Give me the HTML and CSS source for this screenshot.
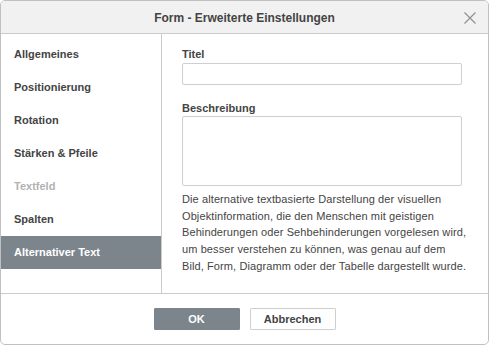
FILE: index.html
```html
<!DOCTYPE html>
<html lang="de">
<head>
<meta charset="utf-8">
<title>Form - Erweiterte Einstellungen</title>
<link rel="stylesheet" href="styles.css">
</head>
<body>
<div class="dialog">
  <div class="header">
    <span class="title">Form - Erweiterte Einstellungen</span>
    <span class="close" aria-label="Schließen">
      <svg width="12" height="12" viewBox="0 0 12 12"><path d="M0.5 0.5 L11.5 11.5 M11.5 0.5 L0.5 11.5" stroke="#8d8d8d" stroke-width="1.1" fill="none"/></svg>
    </span>
  </div>
  <div class="main">
    <ul class="sidebar">
      <li class="item">Allgemeines</li>
      <li class="item">Positionierung</li>
      <li class="item">Rotation</li>
      <li class="item">Stärken &amp; Pfeile</li>
      <li class="item disabled">Textfeld</li>
      <li class="item">Spalten</li>
      <li class="item active">Alternativer Text</li>
    </ul>
    <div class="content">
      <label class="label">Titel</label>
      <div class="input"></div>
      <label class="label label-desc">Beschreibung</label>
      <div class="textarea"></div>
      <p class="note">Die alternative textbasierte Darstellung der visuellen<br>Objektinformation, die den Menschen mit geistigen<br>Behinderungen oder Sehbehinderungen vorgelesen wird,<br>um besser verstehen zu können, was genau auf dem<br>Bild, Form, Diagramm oder der Tabelle dargestellt wurde.</p>
    </div>
  </div>
  <div class="footer">
    <button class="btn primary">OK</button>
    <button class="btn">Abbrechen</button>
  </div>
</div>
</body>
</html>
```
FILE: styles.css
```css
html, body {
  margin: 0;
  padding: 0;
  background: #ffffff;
}
body {
  font-family: "Liberation Sans", Arial, sans-serif;
  font-size: 11px;
  color: #444444;
}
.dialog {
  width: 489px;
  height: 345px;
  box-sizing: border-box;
  border: 1px solid #c0c0c0;
  border-radius: 5px;
  overflow: hidden;
  display: flex;
  flex-direction: column;
  background: #ffffff;
}
.header {
  height: 32px;
  flex: none;
  background: #f1f1f1;
  border-bottom: 1px solid #cbcbcb;
  display: flex;
  align-items: center;
  justify-content: center;
  position: relative;
}
.title {
  font-size: 12px;
  font-weight: bold;
  color: #444444;
  padding-top: 2px;
}
.close {
  position: absolute;
  right: 12px;
  top: 11px;
  width: 12px;
  height: 12px;
  display: block;
}
.close svg {
  display: block;
}
.main {
  flex: 1;
  display: flex;
  min-height: 0;
}
.sidebar {
  list-style: none;
  margin: 0;
  padding: 4px 0 0 0;
  width: 160px;
  flex: none;
  border-right: 1px solid #cbcbcb;
}
.item {
  height: 33px;
  line-height: 33px;
  padding-left: 13px;
  font-weight: bold;
  color: #444444;
}
.item.disabled {
  color: #b2b2b2;
}
.item.active {
  background: #7d858c;
  color: #ffffff;
}
.content {
  flex: 1;
  padding: 13px 0 0 20px;
}
.label {
  display: block;
  font-weight: bold;
  line-height: 14px;
  margin-bottom: 2px;
}
.label-desc {
  margin-top: 16px;
  margin-bottom: 1px;
}
.input {
  width: 278px;
  height: 20px;
  border: 1px solid #cfcfcf;
  border-radius: 2px;
}
.textarea {
  width: 278px;
  height: 68px;
  border: 1px solid #cfcfcf;
  border-radius: 2px;
}
.note {
  margin: 5px 0 0 0;
  white-space: nowrap;
  line-height: 16.7px;
  letter-spacing: 0.1px;
  color: #444444;
}
.footer {
  flex: none;
  height: 51px;
  border-top: 1px solid #cbcbcb;
  display: flex;
  justify-content: center;
  align-items: flex-start;
  gap: 10px;
  padding-top: 14px;
  box-sizing: border-box;
}
.btn {
  width: 86px;
  height: 22px;
  box-sizing: border-box;
  border: 1px solid #cfcfcf;
  background: #ffffff;
  color: #444444;
  font-family: "Liberation Sans", Arial, sans-serif;
  font-size: 11px;
  font-weight: bold;
  border-radius: 1px;
  padding: 0;
}
.btn.primary {
  background: #7d858c;
  border-color: #7d858c;
  color: #ffffff;
}
```
